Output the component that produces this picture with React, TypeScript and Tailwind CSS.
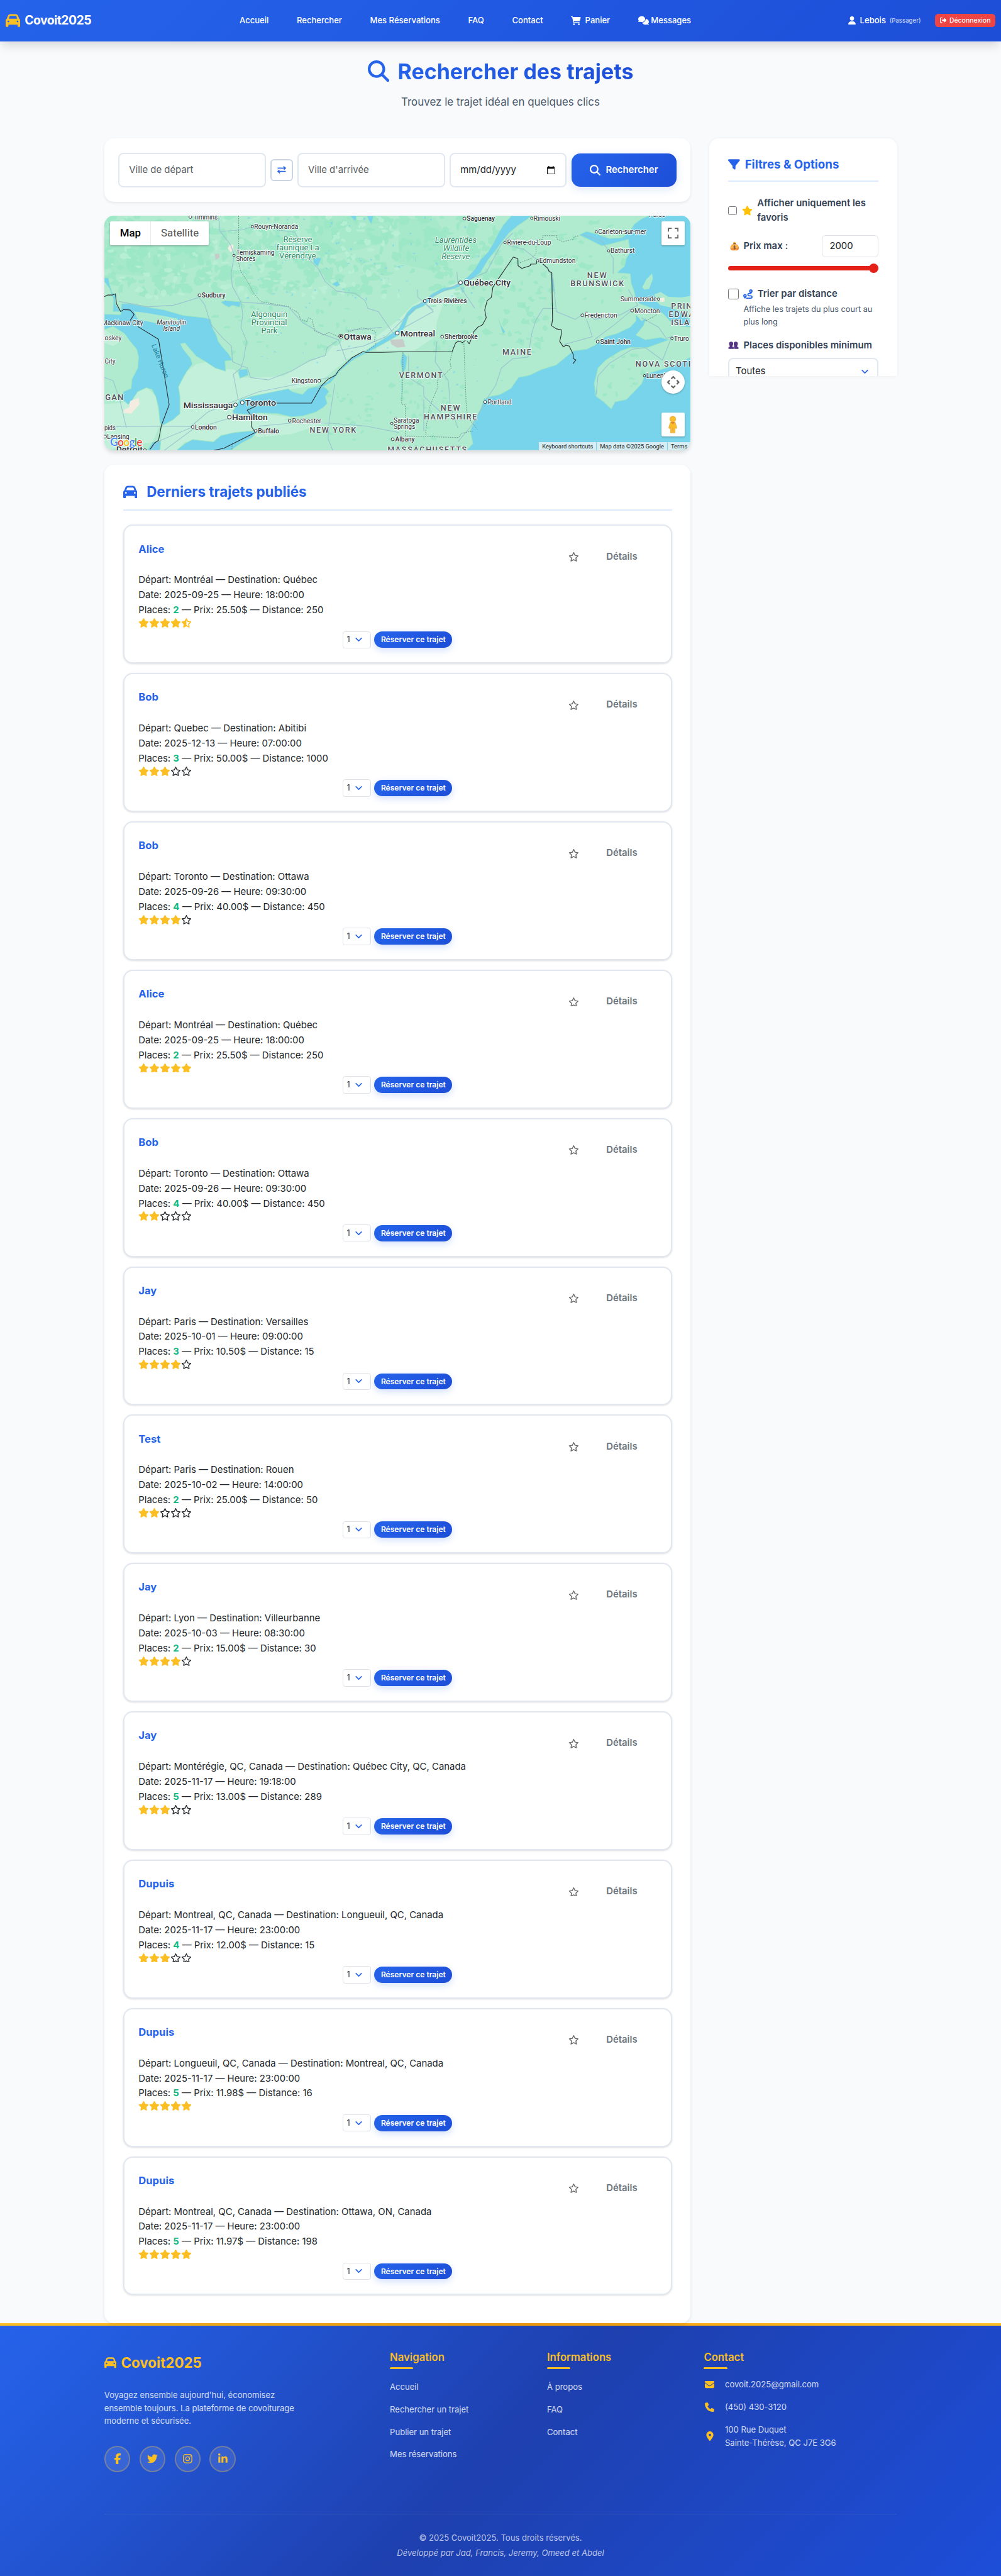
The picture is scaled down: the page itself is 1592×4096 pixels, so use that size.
import type { ReactNode } from "react";
import {
  FaCar,
  FaCartShopping,
  FaComments,
  FaUser,
  FaRightFromBracket,
  FaMagnifyingGlass,
  FaFilter,
  FaStar,
  FaRegStar,
  FaStarHalfStroke,
  FaRoute,
  FaFacebookF,
  FaTwitter,
  FaInstagram,
  FaLinkedinIn,
  FaEnvelope,
  FaPhone,
  FaLocationDot,
} from "react-icons/fa6";

/* ---------- Header ---------- */

function Header() {
  return (
    <header className="relative z-10 flex h-[66px] items-center border-b border-[#3b71ea] bg-linear-[135deg,#2563eb,#1d4ed8] text-[13.05px] font-medium text-white shadow-[0_10px_14px_-3px_rgba(0,0,0,0.13)]">
      <div className="flex w-[381px] items-center gap-[7px] pl-[9px]">
        <FaCar className="h-[23.3px] w-[23.3px] text-[#fbbf24]" />
        <span className="text-[19.4px] font-bold tracking-[-0.56px]">Covoit2025</span>
      </div>
      <nav className="flex items-center gap-[44.7px]">
        <span>Accueil</span>
        <span>Rechercher</span>
        <span>Mes Réservations</span>
        <span>FAQ</span>
        <span>Contact</span>
        <span className="flex items-center gap-[6.5px]">
          <FaCartShopping className="h-[14px] w-[15.7px]" />
          Panier
        </span>
        <span className="flex items-center gap-[3.5px]">
          <FaComments className="h-[15px] w-[17px]" />
          Messages
        </span>
      </nav>
      <div className="ml-auto flex items-center pr-[9px]">
        <FaUser className="mr-[6.5px] h-[13.4px] w-[12px]" />
        <span>Lebois</span>
        <span className="ml-[5.8px] mt-[2px] text-[9.6px] font-medium text-white/75">(Passager)</span>
        <span className="ml-[22.5px] flex h-[20.5px] items-center gap-[5px] rounded-[5.5px] bg-[#ef4444] px-[7.6px] text-[10.44px]">
          <FaRightFromBracket className="h-[10.4px] w-[10.4px]" />
          Déconnexion
        </span>
      </div>
    </header>
  );
}

/* ---------- Search bar ---------- */

function SearchBar() {
  return (
    <div className="flex h-[101px] items-center rounded-[15px] bg-white pl-[22.3px] text-[14.92px] shadow-[0_2px_4px_rgba(0,0,0,0.08)]">
      <div className="flex h-[55.8px] w-[234.7px] items-center rounded-[8px] border-2 border-[#e2e8f0] pl-[15px] text-[#595c5f]">
        Ville de départ
      </div>
      <div className="mx-[7.2px] flex h-[35.4px] w-[35.7px] items-center justify-center rounded-[6px] border-2 border-[#cbd5e1]">
        <svg viewBox="0 0 14 12" className="h-[12px] w-[14px]" fill="none" stroke="#2563eb" strokeWidth="1.5">
          <path d="M0.5 3.2H13M9.8 0.6L13 3.2L10.6 5.6M13.5 8.6H1M4.2 11.4L1 8.6L3.4 6.2" />
        </svg>
      </div>
      <div className="flex h-[55.8px] w-[234.7px] items-center rounded-[8px] border-2 border-[#e2e8f0] pl-[15px] text-[#595c5f]">
        Ville d'arrivée
      </div>
      <div className="ml-[7.5px] flex h-[55.8px] w-[186.2px] items-center justify-between rounded-[8px] border-2 border-[#e2e8f0] pr-[17px] pl-[15px] text-[#212529]">
        mm/dd/yyyy
        <svg viewBox="0 0 12 13" className="h-[13.4px] w-[12.6px]">
          <path
            fill="#000"
            d="M2 0h1.3v1.2h5.4V0H10v1.2h.9c.6 0 1.1.5 1.1 1.1v9.6c0 .6-.5 1.1-1.1 1.1H1.100C.5 13 0 12.500 0 11.900V2.300C0 1.700.5 1.200 1.100 1.200H2zM1.100 4.200v7.700h9.800V4.200z"
          />
        </svg>
      </div>
      <div className="ml-[7.5px] flex h-[53.2px] w-[167.2px] items-center justify-center gap-[8px] rounded-[14px] bg-linear-[135deg,#2563eb,#1d4ed8] font-semibold text-white shadow-[0_4px_14px_rgba(37,99,235,0.16)]">
        <FaMagnifyingGlass className="h-[17px] w-[17px]" />
        Rechercher
      </div>
    </div>
  );
}

/* ---------- Map ---------- */

const MAP_X0 = 14;
const MAP_Y0 = 30;
const MAP_SX = 0.3013;
const MAP_SY = 0.2498;

/* Deterministic terrain patches: irregular polygons scattered over an area. */
function patches(seed: number, count: number, x0: number, y0: number, x1: number, y1: number, size: number) {
  let s = seed;
  const rnd = () => {
    s = (s * 1103515245 + 12345) % 2147483648;
    return s / 2147483648;
  };
  let d = "";
  for (let i = 0; i < count; i++) {
    const cx = x0 + rnd() * (x1 - x0);
    const cy = y0 + rnd() * (y1 - y0);
    const rx = size * (0.4 + rnd());
    const ry = size * (0.4 + rnd());
    const n = 7;
    for (let k = 0; k < n; k++) {
      const a = (k / n) * Math.PI * 2;
      const f = 0.35 + rnd() * 0.8;
      d += `${k === 0 ? "M" : "L"}${Math.round(cx + Math.cos(a) * rx * f)} ${Math.round(cy + Math.sin(a) * ry * f)}`;
    }
    d += "Z";
  }
  return d;
}

const darkNorth = patches(7, 330, 0, 20, 1500, 520, 32);
const darkNorthEast = patches(21, 110, 1500, 20, 2100, 420, 30);
const lightNorth = patches(99, 150, 0, 20, 1568, 560, 20);
const darkEast = patches(5, 70, 1750, 380, 2350, 900, 22);
const darkBrunswick = patches(31, 50, 2150, 60, 2780, 620, 22);
const darkSouth = patches(13, 60, 1180, 1050, 1900, 1500, 16);
const darkMid = patches(17, 40, 550, 560, 1300, 900, 18);
const darkScotia = patches(45, 20, 2650, 900, 3050, 1200, 16);
const smallLakes = patches(63, 90, 700, 30, 2000, 560, 8);
const smallLakes2 = patches(77, 50, 700, 560, 2400, 1150, 7);

const WATER = "#78d4ea";
const waterPaths = [
  "M14 657L100 660L105 590L150 590L240 612L330 630L430 665L545 680L575 690L585 745L605 790L615 830L640 870L670 910L690 950L650 955L655 1020L600 1000L550 960L500 925L460 870L440 840L415 845L430 880L470 940L478 975L450 1020L430 1060L405 1120L413 1180L413 1290L375 1330L320 1365L308 1350L300 1250L285 1180L265 1135L235 1125L190 1150L160 1205L140 1232L110 1200L115 1150L155 1130L160 1070L190 1000L195 930L185 880L150 830L120 780L60 735L14 755Z",
  "M14 425L35 425L42 470L55 520L75 535L70 590L100 640L60 640L62 560L40 490L14 450Z",
  "M725 1205L790 1180L870 1160L985 1132L1005 1150L1060 1168L1090 1130L1160 1110L1185 1130L1200 1150L1180 1180L1190 1225L1170 1250L1130 1280L1060 1305L1000 1310L930 1290L830 1285L780 1295L700 1290L690 1275L715 1240Z",
  "M395 1524L440 1480L480 1455L590 1470L630 1430L700 1410L790 1400L820 1408L790 1445L740 1475L680 1524Z",
  "M270 1470L312 1465L306 1524L240 1524Z",
  "M725 1010L770 1005L772 1045L730 1065L722 1035Z",
  "M630 580L650 570L735 578L728 612L690 600L672 612L650 600Z",
  "M1118 295L1160 300L1140 355L1118 330ZM1215 465L1245 445L1258 470L1240 482Z",
  "M1310 30L1345 30L1340 65ZM1400 30L1435 30L1425 85L1410 60Z",
  "M2110 750L2095 690L2105 720L2130 770L2118 782Z",
  "M2163 30L2120 90L2095 140L2070 200L2040 260L2000 310L1970 370L1940 410L1900 450L1860 480L1800 490L1740 530L1700 578L1640 610L1610 650L1585 710L1568 750L1500 805L1440 850L1390 895L1320 935L1250 1015L1195 1085L1130 1120L1160 1125L1210 1090L1260 1015L1330 945L1400 902L1450 870L1510 830L1568 790L1600 740L1620 670L1660 625L1700 605L1750 548L1800 512L1860 495L1905 470L1960 430L2000 390L2040 310L2080 250L2110 200L2150 140L2200 90L2250 50L2270 30Z",
  "M2520 152L2560 130L2620 150L2680 175L2745 170L2790 130L2810 85L2850 50L2890 30L3109 30L3109 740L3060 735L3000 700L2960 650L2890 612L2840 590L2820 560L2810 510L2795 460L2790 400L2720 393L2760 350L2770 300L2790 260L2780 180L2680 212L2640 222L2570 180Z",
  "M1925 1524L1960 1480L1945 1400L1970 1330L2000 1260L2020 1195L2060 1178L2100 1170L2160 1130L2200 1060L2260 1045L2320 1010L2400 980L2450 930L2490 890L2560 880L2610 850L2660 800L2720 780L2790 740L2820 700L2820 660L2850 700L2875 680L2860 730L2820 790L2870 820L2950 805L2995 820L2880 870L2790 870L2740 890L2660 950L2620 1000L2600 1100L2610 1180L2650 1215L2690 1260L2710 1215L2770 1200L2850 1100L2870 1040L2950 1010L3020 985L3109 930L3109 1524Z",
  "M1590 900L1612 930L1605 1000L1590 1035L1578 960ZM1583 1060L1590 1130L1583 1200Z",
  "M2370 395L2385 440L2390 520L2378 500Z",
];

const landPaths = [
  "M170 640L230 648L310 665L400 685L405 715L340 700L290 715L190 690Z",
  "M2917 530L2950 515L2990 545L3060 550L3109 540L3109 700L3070 650L3000 612L2950 600L2925 570Z",
  "M2853 485L2875 435L2905 398L2910 430L2890 495L2865 500Z",
];

const lightLand = [
  "M500 975L560 960L600 1000L700 1010L740 1060L830 1060L960 1050L1060 980L1180 920L1240 830L1440 780L1450 850L1300 940L1130 1110L870 1160L725 1205L690 1290L840 1290L1000 1312L900 1360L800 1400L630 1425L590 1465L440 1470L395 1524L310 1524L320 1365L413 1290L405 1120L450 1020Z",
  "M1450 800L1560 700L1640 600L1760 520L1900 440L1990 400L1900 520L1800 600L1770 700L1760 800L1650 890L1450 890Z",
  "M14 1230L110 1220L190 1150L240 1125L285 1180L310 1350L270 1470L14 1524Z",
  "M14 755L60 790L100 830L60 860L14 840Z",
  "M790 1400L950 1330L1200 1345L1000 1420L820 1440Z",
];

const roads =
  "M617 40L625 130L680 215L700 280L683 400L690 480L735 580L745 660L735 740L765 830L750 940L735 1000L695 1040L720 1200M625 130L740 120L810 95M920 120L1020 135L1080 290L1145 370L1180 450L1240 510L1340 525L1390 570L1405 620L1460 640L1500 710L1540 780M90 575L240 610L380 600L515 550L545 600L575 720L640 810L685 860L690 960L770 1000L785 1060L880 1075L1000 1020L1100 950L1180 920L1190 870L1240 830M740 580L840 588L985 610L1060 710L1160 780L1250 820L1290 950M14 1380L120 1370L470 1372L560 1280L700 1210L830 1150L1000 1110L1200 1060M1230 1100L1200 1340L1195 1450L1220 1524M830 1370L1000 1350L1200 1350L1400 1370L1568 1410M14 1060L60 1080L95 1200L130 1380M250 1524L310 1460L470 1380M330 1524L480 1390L700 1310M1300 760L1480 740M1240 890L1380 860L1500 800L1600 680L1700 570L1890 460L2030 390L2110 210L2170 140M1700 580L1750 640L1600 740M1875 385L1880 460L1970 620M1665 500L1670 550L1750 630M2150 220L2230 245L2330 340L2380 400L2400 640L2500 690L2560 640L2600 690L2740 660L2830 600L2780 500M2400 620L2330 620L2290 700L2270 780L2250 930L2170 940L2110 1000L2080 1110L2030 1200L2010 1250L1950 1370L1880 1470M2540 150L2640 190L2700 300L2700 400M2560 690L2590 800L2440 850M2600 820L2700 730L2800 630M2850 680L2940 740L2980 810L3010 800L2960 950L2870 870L2800 880L2680 970L2620 1050L2610 1170M1770 830L1760 960L1830 1080L1840 1240L1880 1380M1620 920L1620 1060L1700 1120L1700 1180L1790 1280M1700 1200L1700 1400";

const borders = [
  "M14 545L30 535L55 535L72 527L78 590L100 640L115 628L150 630L171 658L150 697",
  "M190 735L300 817L356 1233L315 1365L300 1460L280 1475L255 1517",
  "M590 1524L645 1510L810 1410L790 1370L788 1300L768 1268L820 1238M920 1223L1107 1223L1160 1112L1195 1070L1235 1045L1250 1015L1320 935L1380 895L1395 900L1480 900L1568 897L1850 895L1868 840L1885 828L1905 838L1920 823M1930 830L1940 845L1952 815L1963 770L1985 740L2010 725L2030 680L2022 630L2035 570L2057 550L2065 485L2095 430L2173 293L2197 303L2198 348L2218 365L2262 348L2264 338L2294 337L2298 320M2330 338L2355 365L2362 385L2376 393L2380 690L2375 730L2400 750L2427 757L2427 780L2418 830L2437 865L2450 855L2468 860L2490 915L2490 940L2503 948L2488 972",
];

const dashed =
  "M723 30V330L735 385L775 460L800 520L840 577L985 608L1038 650L1050 690L1085 705L1090 680L1110 690L1125 765L1175 788L1200 772L1250 800M1300 770L1375 743L1445 765L1440 830L1450 850L1400 890M2208 330L2270 300L2293 270V180H2328V157H2403V178L2435 195L2490 180L2495 165L2520 157M1912 845L1925 1270L1950 1340L1983 1390M1850 900L1838 960L1845 1000L1800 1050L1770 1080L1775 1120L1730 1250L1710 1400L1712 1430M1590 900V1030L1583 1230L1603 1235V1432L1885 1442L1900 1415L1960 1400M688 1480V1524M2930 660L2870 700";

type Label = {
  t: string;
  x: number;
  e: number;
  y: number;
  s: number;
  w?: number;
  c?: string;
  i?: boolean;
};

const PARK = "#2c8a65";
const STATE = "#4b4f55";
const CITY = "#2c2e33";

const labels: Label[] = [
  { t: "Timmins", x: 484, e: 612, y: 52, s: 10.5 },
  { t: "Rouyn-Noranda", x: 805, e: 1037, y: 114, s: 10.5 },
  { t: "Réserve", x: 958, e: 1111, y: 198, s: 12, c: PARK },
  { t: "faunique La", x: 922, e: 1148, y: 250, s: 12, c: PARK },
  { t: "Vérendrye", x: 937, e: 1131, y: 302, s: 12, c: PARK },
  { t: "Temiskaming", x: 709, e: 912, y: 279, s: 10.5 },
  { t: "Shores", x: 709, e: 812, y: 320, s: 10.5 },
  { t: "Sudbury", x: 528, e: 653, y: 551, s: 11, w: 500 },
  { t: "Algonquin", x: 787, e: 980, y: 675, s: 12, c: PARK },
  { t: "Provincial", x: 790, e: 978, y: 727, s: 12, c: PARK },
  { t: "Park", x: 842, e: 928, y: 778, s: 12, c: PARK },
  { t: "Manitoulin", x: 290, e: 446, y: 723, s: 10.5, i: true },
  { t: "Island", x: 324, e: 413, y: 764, s: 10.5, i: true },
  { t: "Mackinaw City", x: 0, e: 218, y: 726, s: 10.5 },
  { t: "Petoskey", x: -35, e: 105, y: 824, s: 10.5 },
  { t: "City", x: 16, e: 72, y: 972, s: 10.5 },
  { t: "GAN", x: 18, e: 114, y: 1202, s: 13, w: 500, c: STATE },
  { t: "pids", x: 14, e: 73, y: 1394, s: 10.5 },
  { t: "Lansing", x: 28, e: 146, y: 1450, s: 10.5 },
  { t: "Detroit", x: 76, e: 216, y: 1536, s: 12.5, w: 500 },
  { t: "Mississauga", x: 431, e: 692, y: 1254, s: 12.8, w: 500 },
  { t: "Toronto", x: 757, e: 920, y: 1240, s: 12.8, w: 500 },
  { t: "Hamilton", x: 688, e: 876, y: 1332, s: 12.8, w: 500 },
  { t: "London", x: 492, e: 607, y: 1390, s: 11, w: 500 },
  { t: "Buffalo", x: 825, e: 936, y: 1414, s: 11, w: 500 },
  { t: "Rochester", x: 1005, e: 1159, y: 1350, s: 11 },
  { t: "Kingston", x: 1002, e: 1137, y: 1096, s: 11 },
  { t: "Ottawa", x: 1278, e: 1424, y: 817, s: 12.8, w: 500 },
  { t: "NEW YORK", x: 1098, e: 1342, y: 1413, s: 12.5, w: 500, c: STATE },
  { t: "Montreal", x: 1577, e: 1760, y: 797, s: 12.8, w: 500 },
  { t: "Saguenay", x: 1927, e: 2075, y: 63, s: 11, w: 500 },
  { t: "Rimouski", x: 2280, e: 2420, y: 61, s: 10.5 },
  { t: "Percé", x: 2888, e: 2975, y: 38, s: 10.5 },
  { t: "Carleton-sur-mer", x: 2620, e: 2874, y: 147, s: 10.5 },
  { t: "Rivière-du-Loup", x: 2140, e: 2372, y: 216, s: 10.5 },
  { t: "Bathurst", x: 2686, e: 2813, y: 268, s: 10.5 },
  { t: "Edmundston", x: 2310, e: 2501, y: 332, s: 10.5 },
  { t: "Laurentides", x: 1759, e: 1979, y: 202, s: 12, c: PARK, i: true },
  { t: "Wildlife", x: 1802, e: 1940, y: 254, s: 12, c: PARK, i: true },
  { t: "Reserve", x: 1794, e: 1943, y: 307, s: 12, c: PARK, i: true },
  { t: "NEW", x: 2562, e: 2665, y: 427, s: 12.5, w: 500, c: STATE },
  { t: "BRUNSWICK", x: 2474, e: 2756, y: 479, s: 12.5, w: 500, c: STATE },
  { t: "Québec City", x: 1910, e: 2158, y: 475, s: 12.8, w: 500 },
  { t: "Trois-Rivières", x: 1719, e: 1927, y: 588, s: 11, w: 500 },
  { t: "Sherbrooke", x: 1810, e: 1985, y: 816, s: 11, w: 500 },
  { t: "Summerside", x: 2738, e: 2930, y: 575, s: 10.5 },
  { t: "Moncton", x: 2812, e: 2946, y: 650, s: 11 },
  { t: "Fredericton", x: 2549, e: 2721, y: 679, s: 11 },
  { t: "PRINCE", x: 3005, e: 3175, y: 622, s: 12.5, w: 500, c: STATE },
  { t: "EDWARD", x: 2993, e: 3192, y: 675, s: 12.5, w: 500, c: STATE },
  { t: "ISLAND", x: 3005, e: 3165, y: 727, s: 12.5, w: 500, c: STATE },
  { t: "Saint John", x: 2631, e: 2792, y: 847, s: 11, w: 500 },
  { t: "Truro", x: 3020, e: 3100, y: 825, s: 10.5 },
  { t: "MAINE", x: 2115, e: 2267, y: 915, s: 12.5, w: 500, c: STATE },
  { t: "NOVA SCOTIA", x: 2818, e: 3142, y: 989, s: 12.5, w: 500, c: STATE },
  { t: "Lunenburg", x: 2874, e: 3035, y: 1063, s: 10.5 },
  { t: "VERMONT", x: 1570, e: 1798, y: 1063, s: 12.5, w: 500, c: STATE },
  { t: "NEW", x: 1789, e: 1891, y: 1273, s: 12.5, w: 500, c: STATE },
  { t: "HAMPSHIRE", x: 1700, e: 1980, y: 1326, s: 12.5, w: 500, c: STATE },
  { t: "Portland", x: 2037, e: 2164, y: 1231, s: 11 },
  { t: "Saratoga", x: 1541, e: 1675, y: 1347, s: 10.5 },
  { t: "Springs", x: 1541, e: 1654, y: 1389, s: 10.5 },
  { t: "Albany", x: 1549, e: 1652, y: 1469, s: 11, w: 500 },
  { t: "MASSACHUSETTS", x: 1508, e: 1926, y: 1536, s: 12.5, w: 500, c: STATE },
];

const dots: [number, number, number][] = [
  [468, 38, 2.3], [795, 99, 1.9], [698, 283, 1.9], [516, 536, 2.3], [706, 1234, 3], [742, 1220, 3], [673, 1312, 3],
  [480, 1375, 2.3], [813, 1399, 2.3], [992, 1335, 2.3], [1148, 1081, 2.3], [1560, 777, 3], [1914, 48, 2.3],
  [2270, 46, 1.9], [2611, 132, 1.9], [2129, 201, 1.9], [2676, 254, 1.9], [2301, 317, 1.9], [1894, 456, 3],
  [1705, 573, 2.3], [1797, 800, 2.3], [2939, 561, 1.9], [2800, 634, 2.3], [2537, 664, 2.3], [2618, 832, 2.3],
  [3010, 810, 1.9], [2865, 1048, 1.9], [2024, 1216, 2.3], [1531, 1352, 1.9], [1536, 1453, 2.3], [18, 1436, 2.3], [228, 1524, 2.6],
];

function MapCanvas() {
  return (
    <svg viewBox="14 30 3095 1494" preserveAspectRatio="none" className="absolute inset-0 h-full w-full">
      <rect x="14" y="30" width="3095" height="1494" fill="#b0ebd0" />
      {lightLand.map((d) => (
        <path key={d} d={d} fill="#c3f0da" />
      ))}
      <path d="M1100 30H1500L1540 60L1510 180L1380 240L1200 280L1110 200ZM14 180H600L560 330L300 420L60 400L14 300ZM1568 60L1760 40L1840 200L1740 380L1568 330Z" fill="#9de7c5" fillOpacity="0.55" />
      {[darkNorth, darkNorthEast, darkEast, darkBrunswick, darkSouth, darkMid, darkScotia].map((d, i) => (
        <path key={i} d={d} fill="#9ae6c4" fillOpacity="0.8" />
      ))}
      <path d={lightNorth} fill="#bcf0d8" fillOpacity="0.75" />
      <path d={smallLakes} fill="#7dd6e6" fillOpacity="0.75" />
      <path d={smallLakes2} fill="#7dd6e6" fillOpacity="0.6" />
      {waterPaths.map((d) => (
        <path key={d} d={d} fill={WATER} stroke="#9ae6c4" strokeWidth="1" vectorEffect="non-scaling-stroke" />
      ))}
      {landPaths.map((d) => (
        <path key={d} d={d} fill="#aeeacf" />
      ))}
      <path d="M665 235L680 212L695 215L695 250L680 262ZM150 1210L195 1190L200 1230L155 1290L115 1285L118 1265L145 1250ZM2945 555L2970 550L2972 575L2950 580Z" fill="#f4ece0" />
      <path d="M1522 820L1590 815L1603 865L1560 870L1530 850ZM595 275L620 270L622 295L602 312Z" fill="#c6cdc9" />
      <g fill="none" strokeLinejoin="round">
        <path d={roads} stroke="#98bfcf" strokeOpacity="0.85" strokeWidth="1.2" vectorEffect="non-scaling-stroke" />
        <path d={dashed} stroke="#5d7f78" strokeWidth="0.8" strokeDasharray="2 1.6" vectorEffect="non-scaling-stroke" />
        {borders.map((d) => (
          <path key={d} d={d} stroke="#2b2f33" strokeWidth="1.1" vectorEffect="non-scaling-stroke" />
        ))}
      </g>
    </svg>
  );
}

function MapLabels() {
  const px = (x: number) => (x - MAP_X0) * MAP_SX;
  const py = (y: number) => (y - MAP_Y0) * MAP_SY;
  return (
    <svg viewBox="0 0 932.4 373.2" className="absolute inset-0 h-full w-full font-[Roboto]">
      {dots.map(([x, y, r]) => (
        <circle key={`${x}-${y}`} cx={px(x)} cy={py(y)} r={r} fill="#fff" stroke="#2c2e33" strokeWidth="1" />
      ))}
      <circle cx={px(1262)} cy={py(797)} r="3.3" fill="#fff" stroke="#222" strokeWidth="1" />
      <circle cx={px(1262)} cy={py(797)} r="1.7" fill="#222" />
      <g transform={`translate(${px(262)} ${py(855)}) rotate(68)`}>
        <text fontSize="11" fill="#27819b" textLength="57">
          Lake Huron
        </text>
      </g>
      {labels.map((l) => (
        <text
          key={`${l.t}-${l.x}`}
          x={px(l.x)}
          y={py(l.y)}
          fontSize={l.s}
          fontWeight={l.w ?? 400}
          fontStyle={l.i ? "italic" : "normal"}
          fill={l.c ?? CITY}
          stroke="#fff"
          strokeOpacity="0.85"
          strokeWidth="2"
          strokeLinejoin="round"
          paintOrder="stroke"
          textLength={(l.e - l.x) * MAP_SX}
          lengthAdjust={l.c === STATE ? "spacing" : "spacingAndGlyphs"}
        >
          {l.t}
        </text>
      ))}
      <text x="9" y="366" fontSize="17.5" fontWeight="600" textLength="51.6" stroke="#fff" strokeWidth="1.6" strokeLinejoin="round" paintOrder="stroke" className="font-[Lato]">
        <tspan fill="#4285f4">G</tspan>
        <tspan fill="#ea4335">o</tspan>
        <tspan fill="#fbbc05">o</tspan>
        <tspan fill="#4285f4">g</tspan>
        <tspan fill="#34a853">l</tspan>
        <tspan fill="#ea4335">e</tspan>
      </text>
    </svg>
  );
}

function MapControl({ className, children }: { className: string; children: ReactNode }) {
  return (
    <div className={`absolute flex h-[37.3px] w-[37.3px] items-center justify-center bg-white shadow-[0_1px_3px_rgba(0,0,0,0.3)] ${className}`}>
      {children}
    </div>
  );
}

function MapPanel() {
  return (
    <div className="relative mt-[22.1px] h-[373.2px] w-full rounded-[15px] shadow-[0_4px_6px_rgba(0,0,0,0.12)]">
      <div className="relative h-full w-full overflow-hidden rounded-[15px]">
        <MapCanvas />
        <MapLabels />
        <div className="absolute top-[9.2px] left-[9.4px] flex h-[37.4px] w-[156.7px] items-center rounded-[2px] bg-white font-[Roboto] text-[16.8px] shadow-[0_1px_3px_rgba(0,0,0,0.3)]">
          <div className="flex h-full w-[64.8px] items-center justify-center border-r border-[#ebebeb] font-medium text-black">Map</div>
          <div className="flex flex-1 items-center justify-center text-[#565656]">Satellite</div>
        </div>
        <MapControl className="top-[9.2px] right-[9.4px] rounded-[2px]">
          <svg viewBox="0 0 18 18" className="h-[17.3px] w-[17.3px]" fill="none" stroke="#666" strokeWidth="2.2">
            <path d="M1.100 6.500V1.100H6.500M11.500 1.100H16.900V6.500M16.900 11.500V16.900H11.500M6.500 16.900H1.100V11.500" />
          </svg>
        </MapControl>
        <MapControl className="right-[9.4px] bottom-[89.8px] rounded-full">
          <svg viewBox="0 0 22 22" className="h-[21.5px] w-[21.5px]" fill="none" stroke="#666" strokeWidth="2.3">
            <path d="M7.800 5.300L11 2.100L14.200 5.300M7.800 16.700L11 19.900L14.200 16.700M5.300 7.800L2.100 11L5.300 14.200M16.700 7.800L19.900 11L16.700 14.200" />
          </svg>
        </MapControl>
        <MapControl className="right-[9.4px] bottom-[22.6px] rounded-[2px]">
          <svg viewBox="0 0 16 28" className="h-[28px] w-[16px]">
            <path d="M4 10.500h8l2.600 9-1.600 1.200-1.400-2.200V27.500H8.600l-.6-8-.6 8H4.400V18.500L3 20.700 1.400 19.500z" fill="#fbbc2a" stroke="#d8922a" strokeWidth="0.5" />
            <path d="M5 10l3 4 3-4z" fill="#e17c33" />
            <circle cx="8" cy="5.500" r="4.800" fill="#fbbc2a" stroke="#d8922a" strokeWidth="0.5" />
          </svg>
        </MapControl>
        <div className="absolute right-0 bottom-0 flex h-[13.2px] items-center gap-[0.8px] font-[Roboto] text-[9.35px] whitespace-nowrap text-[#1c1c1c]">
          <span className="flex h-full w-[91.3px] items-center justify-center bg-[#f5f5f5]/75">Keyboard shortcuts</span>
          <span className="flex h-full w-[111.8px] items-center justify-center bg-[#f5f5f5]/75">Map data ©2025 Google</span>
          <span className="flex h-full w-[36.6px] items-center justify-center bg-[#f5f5f5]/75">Terms</span>
        </div>
      </div>
    </div>
  );
}

/* ---------- Trips ---------- */

type Trip = {
  name: string;
  from: string;
  to: string;
  date: string;
  time: string;
  seats: number;
  price: string;
  km: string;
  stars: number;
};

const trips: Trip[] = [
  { name: "Alice", from: "Montréal", to: "Québec", date: "2025-09-25", time: "18:00:00", seats: 2, price: "25.50", km: "250", stars: 4.5 },
  { name: "Bob", from: "Quebec", to: "Abitibi", date: "2025-12-13", time: "07:00:00", seats: 3, price: "50.00", km: "1000", stars: 3 },
  { name: "Bob", from: "Toronto", to: "Ottawa", date: "2025-09-26", time: "09:30:00", seats: 4, price: "40.00", km: "450", stars: 4 },
  { name: "Alice", from: "Montréal", to: "Québec", date: "2025-09-25", time: "18:00:00", seats: 2, price: "25.50", km: "250", stars: 5 },
  { name: "Bob", from: "Toronto", to: "Ottawa", date: "2025-09-26", time: "09:30:00", seats: 4, price: "40.00", km: "450", stars: 2 },
  { name: "Jay", from: "Paris", to: "Versailles", date: "2025-10-01", time: "09:00:00", seats: 3, price: "10.50", km: "15", stars: 4 },
  { name: "Test", from: "Paris", to: "Rouen", date: "2025-10-02", time: "14:00:00", seats: 2, price: "25.00", km: "50", stars: 2 },
  { name: "Jay", from: "Lyon", to: "Villeurbanne", date: "2025-10-03", time: "08:30:00", seats: 2, price: "15.00", km: "30", stars: 4 },
  { name: "Jay", from: "Montérégie, QC, Canada", to: "Québec City, QC, Canada", date: "2025-11-17", time: "19:18:00", seats: 5, price: "13.00", km: "289", stars: 3 },
  { name: "Dupuis", from: "Montreal, QC, Canada", to: "Longueuil, QC, Canada", date: "2025-11-17", time: "23:00:00", seats: 4, price: "12.00", km: "15", stars: 3 },
  { name: "Dupuis", from: "Longueuil, QC, Canada", to: "Montreal, QC, Canada", date: "2025-11-17", time: "23:00:00", seats: 5, price: "11.98", km: "16", stars: 5 },
  { name: "Dupuis", from: "Montreal, QC, Canada", to: "Ottawa, ON, Canada", date: "2025-11-17", time: "23:00:00", seats: 5, price: "11.97", km: "198", stars: 5 },
];

function Stars({ value }: { value: number }) {
  return (
    <div className="flex h-[14.9px]">
      {[1, 2, 3, 4, 5].map((n) =>
        value >= n ? (
          <FaStar key={n} className="h-[14.9px] w-[16.9px] text-[#fbbf24]" />
        ) : value >= n - 0.5 ? (
          <FaStarHalfStroke key={n} className="h-[14.9px] w-[16.9px] text-[#fbbf24]" />
        ) : (
          <FaRegStar key={n} className="h-[14.9px] w-[16.9px] text-[#212529]" />
        ),
      )}
    </div>
  );
}

function Chevron({ className }: { className: string }) {
  return (
    <svg viewBox="0 0 12 7" className={className} fill="none" stroke="#2563eb" strokeWidth="1.9" strokeLinecap="round" strokeLinejoin="round">
      <path d="M1 1l5 5 5-5" />
    </svg>
  );
}

function TripCard({ trip }: { trip: Trip }) {
  return (
    <article className="mb-[14.95px] h-[220.9px] rounded-[15px] border-2 border-[#e2e8f0] bg-white px-[22.6px] pt-[23.2px] text-[14.92px] leading-[23.87px] text-[#212529] shadow-[0_1px_3px_rgba(0,0,0,0.14)]">
      <div className="flex h-[51.8px] justify-between">
        <h3 className="text-[16.6px] leading-[26.3px] font-bold text-[#2563eb]">{trip.name}</h3>
        <div className="flex items-center pr-[30.5px]">
          <FaRegStar className="mr-[43.8px] h-[14.9px] w-[16.8px] text-[#666]" />
          <span className="font-semibold text-[#6c757d]">Détails</span>
        </div>
      </div>
      <p>
        Départ: {trip.from} — Destination: {trip.to}
      </p>
      <p>
        Date: {trip.date} — Heure: {trip.time}
      </p>
      <p>
        Places: <b className="font-bold text-[#10b981]">{trip.seats}</b> — Prix: {trip.price}$ — Distance: {trip.km}
      </p>
      <Stars value={trip.stars} />
      <div className="mt-[5.6px] flex items-center justify-center gap-[5.5px]">
        <div className="flex h-[27.6px] w-[44.8px] items-center justify-between rounded-[4px] border border-[#dee2e6] pr-[12.5px] pl-[5.5px] text-[12.68px] text-[#343a40]">
          1
          <Chevron className="h-[6px] w-[11px]" />
        </div>
        <div className="flex h-[25.9px] w-[124.1px] items-center justify-center rounded-full bg-linear-[135deg,#2563eb,#1d4ed8] text-[12.05px] font-semibold text-white shadow-[0_4px_12px_rgba(37,99,235,0.2)]">
          Réserver ce trajet
        </div>
      </div>
    </article>
  );
}

function TripList() {
  return (
    <section className="mt-[22.3px] h-[2955.6px] rounded-[15px] bg-white px-[29.7px] pt-[29.6px] shadow-[0_2px_5px_rgba(0,0,0,0.09)]">
      <h2 className="mb-[22.2px] flex h-[44.1px] gap-[15px] border-b-2 border-[#dbeafe] text-[22.38px] leading-[27px] font-bold text-[#2563eb]">
        <FaCar className="mt-[2.5px] h-[22.5px] w-[22.5px]" />
        Derniers trajets publiés
      </h2>
      {trips.map((t, i) => (
        <TripCard key={i} trip={t} />
      ))}
    </section>
  );
}

/* ---------- Filters ---------- */

function MoneyBag() {
  return (
    <svg viewBox="0 0 16 16" className="h-[14.5px] w-[14.5px]">
      <path d="M5.200 .6l1.500 1.200L8 .4l1.300 1.400L10.800 .6 9.700 4H6.300z" fill="#fbb034" />
      <path d="M6.200 4h3.600c3.400 1 5.700 4 5.700 7.300 0 2.900-1.700 4.500-4.300 4.500H4.800C2.200 15.800.5 14.200.5 11.300.5 8 2.800 5 6.200 4z" fill="#ef8f3c" />
      <path d="M6.200 4.500h3.400c2.800.8 4.600 3 5 5.500C12.500 12.300 4.500 12.800 1.200 10.800 1.400 7.700 3.500 5.200 6.200 4.500z" fill="#fbb64e" />
      <rect x="5.700" y="3.400" width="4.600" height="1.200" rx="0.600" fill="#6b4a3c" />
      <path d="M10 8.600C9.300 7.700 6.400 7.700 6.400 9.200c0 1.600 3.500.9 3.500 2.500 0 1.500-2.900 1.500-3.700.5M8.100 7v6.700" fill="none" stroke="#6b4a3c" strokeWidth="1" />
    </svg>
  );
}

function People() {
  return (
    <svg viewBox="0 0 18 13" className="h-[12px] w-[17px]" fill="#533482">
      <path d="M1.500 3.500C1.500 1.300 3 .3 5 .3s3.500 1 3.500 3.200S7.500 7.500 6.500 8.500c1.500.6 3 1 3 2.500v1.800H.3V11c0-1.500 1.700-2 3-2.500C2.300 7.500 1.500 5.700 1.500 3.500z" />
      <path d="M9.500 3.500c0-2.200 1.500-3.200 3.500-3.200s3.500 1 3.500 3.200-.8 4-1.800 5c1.300.5 3 1 3 2.500v1.800H10.300V11c0-1.300-.8-2-1.600-2.400.9-.2 2.200-.6 2.200-.6-.9-1-1.400-2.600-1.400-4.500z" />
    </svg>
  );
}

function Filters() {
  return (
    <aside className="ml-[29.8px] h-[378px] w-[298.4px] overflow-hidden rounded-t-[15px] bg-white px-[29.8px] pt-[29.6px] text-[14.92px] font-semibold text-[#334155] shadow-[0_0_5px_rgba(0,0,0,0.06)]">
      <h2 className="flex h-[39.4px] gap-[8px] border-b-2 border-[#dbeafe] text-[18.65px] leading-[23px] font-bold text-[#2563eb]">
        <FaFilter className="mt-[2px] h-[18.7px] w-[18.7px]" />
        Filtres &amp; Options
      </h2>
      <div className="mt-[22.7px] flex items-center leading-[23.4px]">
        <span className="h-[14.2px] w-[14.2px] shrink-0 rounded-[2.5px] border border-[#767676]" />
        <FaStar className="mx-[7.5px] h-[15.5px] w-[17px] shrink-0 text-[#ffc107]" />
        <span>Afficher uniquement les favoris</span>
      </div>
      <div className="mt-[15.8px] flex h-[34.6px] items-center">
        <span className="flex w-[24.4px] justify-end pr-[7px]">
          <MoneyBag />
        </span>
        Prix max :
        <span className="ml-auto flex h-full w-[89.6px] items-center rounded-[6px] border border-[#dee2e6] pl-[11.2px] font-normal text-[#212529]">
          2000
        </span>
      </div>
      <div className="mt-[9.8px] flex h-[14.9px] items-center">
        <div className="h-[7.2px] flex-1 rounded-full bg-[#e32119]" />
        <div className="-ml-[14.9px] h-[14.9px] w-[14.9px] rounded-full bg-[#e32119]" />
      </div>
      <div className="mt-[22px] flex h-[23.4px] items-center">
        <span className="h-[16.9px] w-[16.9px] rounded-[2.5px] border border-[#767676]" />
        <FaRoute className="mr-[7.5px] ml-[7.4px] h-[15px] w-[15px] text-[#2563eb]" />
        Trier par distance
      </div>
      <p className="mt-[3.5px] pl-[24.4px] text-[12.68px] leading-[19.6px] font-normal text-[#475569]">
        Affiche les trajets du plus court au plus long
      </p>
      <div className="mt-[15.5px] flex h-[23.4px] items-center">
        <span className="flex w-[24.4px] justify-end pr-[7px]">
          <People />
        </span>
        <span className="whitespace-nowrap">Places disponibles minimum</span>
      </div>
      <div className="mt-[8px] flex h-[44px] items-center justify-between rounded-[8px] border-2 border-[#e2e8f0] pr-[14px] pl-[10px] font-normal text-[#212529]">
        Toutes
        <Chevron className="h-[6px] w-[11px]" />
      </div>
    </aside>
  );
}

/* ---------- Footer ---------- */

function FooterColumn({ title, children }: { title: string; children: ReactNode }) {
  return (
    <div>
      <h4 className="text-[16.7px] leading-[20px] font-semibold text-[#fbbf24]">{title}</h4>
      <div className="mt-[5.4px] h-[3px] w-[37.3px] rounded-full bg-[#fbbf24]" />
      {children}
    </div>
  );
}

function FooterLinks({ items }: { items: string[] }) {
  return (
    <ul className="mt-[18.6px] leading-[21px] text-white/80">
      {items.map((l) => (
        <li key={l} className="mb-[14.6px]">
          {l}
        </li>
      ))}
    </ul>
  );
}

function Social({ children }: { children: ReactNode }) {
  return (
    <span className="flex h-[41.7px] w-[41.7px] items-center justify-center rounded-full border-2 border-[#fbbf24]/30 bg-white/10 text-[#fbbf24]">
      {children}
    </span>
  );
}

function Footer() {
  return (
    <footer className="h-[401.8px] bg-linear-[135deg,#2563eb_0%,#1e40af_50%,#1d4ed8_100%] text-[13.05px]">
      <div className="h-[4px] bg-linear-[90deg,#fbbf24,#f59e0b,#fbbf24]" />
      <div className="mx-[165.8px] grid h-[300px] grid-cols-[454.3px_249.9px_249.4px_1fr] border-b border-white/10 pt-[40.3px]">
        <div>
          <div className="mt-[4.9px] flex h-[27px] items-center gap-[7.5px] text-[22.38px] font-bold text-[#fbbf24]">
            <FaCar className="h-[19.5px] w-[19.2px]" />
            Covoit2025
          </div>
          <p className="mt-[27.3px] w-[320px] leading-[20.88px] text-white/80">
            Voyagez ensemble aujourd'hui, économisez ensemble toujours. La plateforme de covoiturage moderne et sécurisée.
          </p>
          <div className="mt-[28.6px] flex gap-[14.2px]">
            <Social>
              <FaFacebookF className="h-[17.5px] w-[12px]" />
            </Social>
            <Social>
              <FaTwitter className="h-[16.8px] w-[16.8px]" />
            </Social>
            <Social>
              <FaInstagram className="h-[16.8px] w-[16.8px]" />
            </Social>
            <Social>
              <FaLinkedinIn className="h-[16.8px] w-[16.8px]" />
            </Social>
          </div>
        </div>
        <FooterColumn title="Navigation">
          <FooterLinks items={["Accueil", "Rechercher un trajet", "Publier un trajet", "Mes réservations"]} />
        </FooterColumn>
        <FooterColumn title="Informations">
          <FooterLinks items={["À propos", "FAQ", "Contact"]} />
        </FooterColumn>
        <FooterColumn title="Contact">
          <ul className="mt-[14.4px] leading-[20.88px] whitespace-nowrap text-white/80">
            <li className="mb-[14.7px] flex items-center">
              <span className="mr-[15px] flex w-[18.6px] justify-center text-[#fbbf24]">
                <FaEnvelope className="h-[15px] w-[15px]" />
              </span>
              covoit.2025@gmail.com
            </li>
            <li className="mb-[15.2px] flex items-center">
              <span className="mr-[15px] flex w-[18.6px] justify-center text-[#fbbf24]">
                <FaPhone className="h-[15px] w-[15px]" />
              </span>
              (450) 430-3120
            </li>
            <li className="flex items-center">
              <span className="mr-[15px] flex w-[18.6px] justify-center text-[#fbbf24]">
                <FaLocationDot className="h-[15px] w-[12px]" />
              </span>
              <span>
                100 Rue Duquet
                <br />
                Sainte-Thérèse, QC J7E 3G6
              </span>
            </li>
          </ul>
        </FooterColumn>
      </div>
      <div className="pt-[26.5px] text-center leading-[20.88px] text-white/70">
        <p>© 2025 Covoit2025. Tous droits réservés.</p>
        <p className="mt-[3.4px] italic">Développé par Jad, Francis, Jeremy, Omeed et Abdel</p>
      </div>
    </footer>
  );
}

export default function App() {
  return (
    <div className="h-[4096px] w-[1592px] overflow-hidden bg-[#f8fafc] font-[Inter,sans-serif]">
      <Header />
      <div className="flex h-[154px] flex-col items-center pt-[26px]">
        <h1 className="flex h-[42px] items-center gap-[14px] text-[34px] font-bold">
          <FaMagnifyingGlass className="h-[34px] w-[34px] text-[#2563eb]" />
          <span className="bg-linear-[135deg,#2563eb,#1d4ed8] bg-clip-text text-transparent">Rechercher des trajets</span>
        </h1>
        <p className="mt-[15.6px] text-[16.95px] leading-[24px] text-[#475569]">Trouvez le trajet idéal en quelques clics</p>
      </div>
      <main className="flex h-[3474.2px] items-start pl-[166px]">
        <div className="w-[932.4px]">
          <SearchBar />
          <MapPanel />
          <TripList />
        </div>
        <Filters />
      </main>
      <Footer />
    </div>
  );
}
